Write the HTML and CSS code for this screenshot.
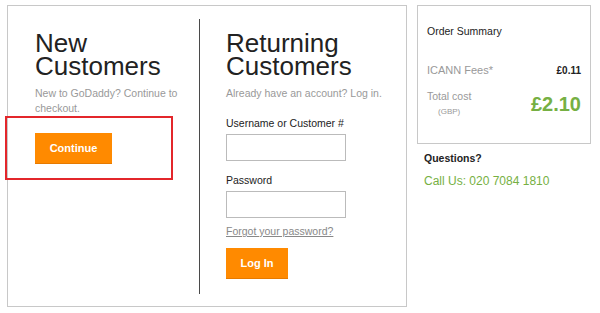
FILE: index.html
```html
<!DOCTYPE html>
<html lang="en">
<head>
<meta charset="UTF-8">
<meta name="viewport" content="width=device-width, initial-scale=1.0">
<title>Checkout</title>
<link rel="stylesheet" href="styles.css">
</head>
<body>

<div class="page">
  <div class="login-box">
    <div class="col col-new">
      <h1 class="title">New<br>Customers</h1>
      <p class="lead">New to GoDaddy? Continue to checkout.</p>
      <button class="btn btn-continue">Continue</button>
      <div class="highlight"></div>
    </div>
    <div class="col col-returning">
      <h1 class="title">Returning<br>Customers</h1>
      <p class="lead">Already have an account? Log in.</p>
      <label class="field-label first" for="user">Username or Customer #</label>
      <input class="field" id="user" type="text">
      <label class="field-label" for="pass">Password</label>
      <input class="field" id="pass" type="password">
      <a class="forgot" href="#">Forgot your password?</a>
      <button class="btn btn-login">Log In</button>
    </div>
  </div>

  <div class="sidebar">
    <div class="summary">
      <div class="summary-title">Order Summary</div>
      <div class="summary-row">
        <span class="fee-label">ICANN Fees*</span>
        <span class="fee-value">£0.11</span>
      </div>
      <div class="summary-row total-row">
        <div>
          <div class="total-label">Total cost</div>
          <div class="currency">(GBP)</div>
        </div>
        <div class="total-value">£2.10</div>
      </div>
    </div>
    <div class="questions">Questions?</div>
    <div class="phone">Call Us: 020 7084 1810</div>
  </div>
</div>

</body>
</html>
```

FILE: styles.css
```css
body {
  margin: 0;
  font-family: "Liberation Sans", Arial, sans-serif;
  color: #222;
  background: #fff;
}

.page {
  display: flex;
  align-items: flex-start;
  padding: 5px 0 0 7px;
}

.login-box {
  display: flex;
  box-sizing: border-box;
  width: 400px;
  height: 302px;
  padding: 13px 0 12px;
  border: 1px solid #c8c8c8;
}

.col {
  position: relative;
  padding-top: 13px;
}

.col-new {
  width: 164px;
  padding-left: 27px;
  border-right: 1px solid #4a4a4a;
}

.col-returning {
  padding-left: 26px;
}

.title {
  margin: 0;
  font-size: 26px;
  line-height: 23px;
  font-weight: normal;
  color: #222;
}

.lead {
  margin: 8px 0 0;
  font-size: 10.5px;
  line-height: 15px;
  color: #999;
}

.btn {
  display: block;
  height: 31px;
  border: none;
  border-bottom: 1px solid #e67a00;
  background-color: #ff8a00;
  color: #fff;
  font-family: inherit;
  font-size: 11px;
  font-weight: bold;
  padding: 0;
  cursor: pointer;
}

.btn-continue {
  width: 77px;
  margin-top: 17px;
}

.btn-login {
  width: 62px;
  margin-top: 9px;
}

.highlight {
  position: absolute;
  left: -3px;
  top: 97px;
  box-sizing: border-box;
  width: 168px;
  height: 64px;
  border: 2px solid #e3262b;
}

.field-label {
  display: block;
  margin-top: 12px;
  font-size: 10.5px;
  line-height: 15px;
  color: #222;
}

.field-label.first {
  margin-top: 15px;
}

.field {
  display: block;
  box-sizing: border-box;
  width: 120px;
  height: 27px;
  margin-top: 3px;
  border: 1px solid #bbb;
  padding: 0 4px;
}

.forgot {
  display: block;
  margin-top: 6px;
  font-size: 10.5px;
  line-height: 15px;
  color: #888;
}

.sidebar {
  margin-left: 10px;
  width: 174px;
}

.summary {
  box-sizing: border-box;
  height: 139px;
  padding: 18px 9px 0;
  border: 1px solid #c8c8c8;
}

.summary-title {
  font-size: 10.5px;
  line-height: 15px;
  color: #222;
}

.summary-row {
  display: flex;
  justify-content: space-between;
  align-items: baseline;
  margin-top: 24px;
  line-height: 15px;
}

.fee-label {
  font-size: 11px;
  color: #999;
}

.fee-value {
  font-size: 10px;
  font-weight: bold;
  color: #222;
}

.total-row {
  align-items: flex-start;
  margin-top: 11px;
}

.total-label {
  font-size: 10.5px;
  line-height: 15px;
  color: #999;
}

.currency {
  margin-top: 1px;
  padding-left: 11px;
  font-size: 8px;
  line-height: 14px;
  color: #999;
}

.total-value {
  font-size: 20px;
  line-height: 30px;
  font-weight: bold;
  color: #76b043;
}

.questions {
  margin-top: 7px;
  padding-left: 7px;
  font-size: 10.5px;
  line-height: 15px;
  font-weight: bold;
  color: #222;
}

.phone {
  margin-top: 7px;
  padding-left: 7px;
  font-size: 12px;
  line-height: 16px;
  color: #76b043;
}
```
